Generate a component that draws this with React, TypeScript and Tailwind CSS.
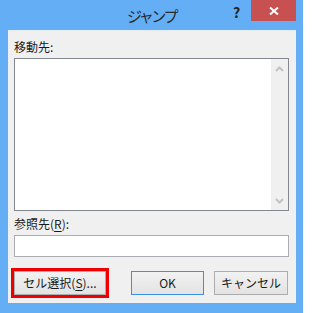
import React from "react";

const font = { fontFamily: '"Noto Sans CJK JP", "Noto Sans", sans-serif' };

function Chevron({ down }: { down?: boolean }) {
    return (
        <svg width="9" height="6" viewBox="0 0 9 6" className="block">
            <path
                d={down ? "M1 1 L4.5 4.5 L8 1" : "M1 5 L4.5 1.5 L8 5"}
                fill="none"
                stroke="#c2c2c2"
                strokeWidth="2"
            />
        </svg>
    );
}

function Button({ children, focused, className = "" }: { children: React.ReactNode; focused?: boolean; className?: string }) {
    return (
        <div
            className={
                "flex items-center justify-center h-[24px] text-[12px] text-[#1a1a1a] bg-gradient-to-b from-[#f2f2f2] to-[#e3e3e3] border " +
                (focused ? "border-[#3c8fe6] " : "border-[#adadad] ") +
                className
            }
        >
            {children}
        </div>
    );
}

export default function App() {
    return (
        <div className="w-[303px] h-[313px] bg-[#63aef4] flex flex-col overflow-hidden" style={font}>
            {/* Title bar */}
            <div className="h-[30px] relative flex items-center justify-center">
                <span className="text-[15px] text-[#2a2a2a] tracking-[-2.5px] mt-[2px]">ジャンプ</span>
                <span className="absolute left-[233px] top-[2px] text-[14px] font-bold text-[#222]">?</span>
                <div className="absolute left-[251px] top-0 w-[45px] h-[21px] bg-[#c75050] flex items-center justify-center">
                    <svg width="10" height="8" viewBox="0 0 10 8">
                        <path d="M1 0.5 L9 7.5 M9 0.5 L1 7.5" stroke="#fff" strokeWidth="2" />
                    </svg>
                </div>
            </div>

            {/* Body */}
            <div className="ml-[8px] mr-[7px] h-[273px] bg-[#f0f0f0] border-t border-[#e4ebf2] flex flex-col pl-[6px] pr-[7px]">
                <div className="mt-[8px] h-[16px] leading-[16px] text-[12px] text-[#1a1a1a]">移動先:</div>

                <div className="mt-[3px] h-[153px] border border-[#828790] bg-white flex justify-end">
                    <div className="w-[17px] bg-[#f0f0f0] flex flex-col items-center justify-between pt-[7px] pb-[6px]">
                        <Chevron />
                        <Chevron down />
                    </div>
                </div>

                <div className="mt-[5px] h-[16px] leading-[16px] text-[12px] text-[#1a1a1a]">
                    参照先(<span className="underline underline-offset-2">R</span>):
                </div>

                <div className="mt-[3px] h-[22px] border border-[#abadb3] bg-white" />

                <div className="mt-[14px] flex items-center">
                    <Button className="w-[92px] outline-[3px] outline-solid outline-[#ee0000] outline-offset-0">
                        セル選択(<span className="underline underline-offset-2">S</span>)...
                    </Button>
                    <Button focused className="w-[73px] ml-[25px]">OK</Button>
                    <Button className="w-[74px] ml-[10px]">キャンセル</Button>
                </div>
            </div>
        </div>
    );
}
